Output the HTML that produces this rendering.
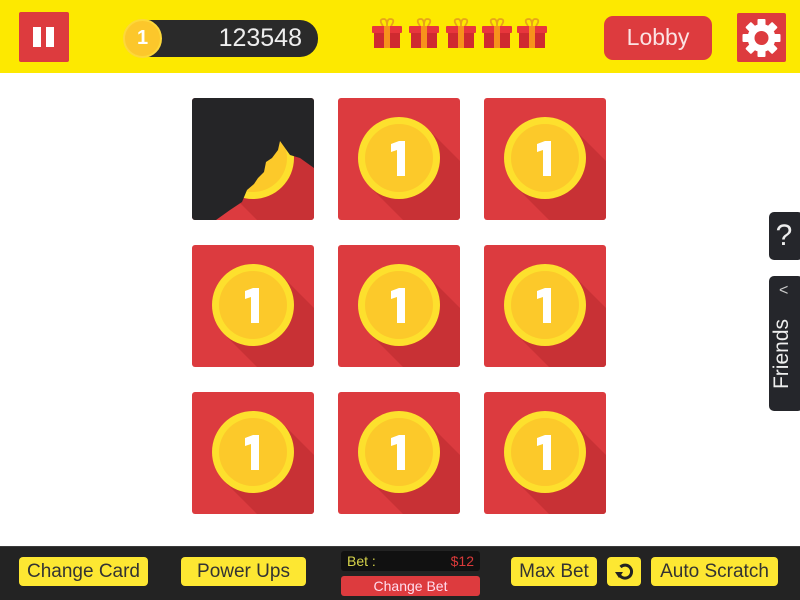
<!DOCTYPE html>
<html><head><meta charset="utf-8"><style>
*{margin:0;padding:0;box-sizing:border-box}
body{width:800px;height:600px;overflow:hidden;background:#fff;font-family:"Liberation Sans",sans-serif;position:relative}
.abs{position:absolute}
.top{left:0;top:0;width:800px;height:73px;background:#fde900}
.bot{left:0;top:546px;width:800px;height:54px;background:#232323;border-top:1px solid #3a3a3a}
.yb{position:absolute;background:#fde732;border-radius:4px;color:#333;font-size:19px;text-align:center;line-height:29px;height:29px;top:557px}
.tab{position:absolute;left:769px;width:34px;background:#25262b;border-radius:5px;color:#eee}
</style></head><body>
<div class="abs top"></div>
<div class="abs" style="left:19px;top:12px;width:50px;height:50px;background:#dd3b3e;border-radius:2px"></div>
<div class="abs" style="left:33px;top:27px;width:8px;height:20px;background:#fff"></div>
<div class="abs" style="left:46px;top:27px;width:8px;height:20px;background:#fff"></div>
<div class="abs" style="left:148px;top:20px;width:170px;height:37px;background:#2a2a2a;border-radius:0 18px 18px 0"></div>
<div class="abs" style="left:123px;top:19px;width:39px;height:39px;border-radius:50%;background:#fcc72b;border:2px solid #fdd83a"></div>
<div class="abs" style="left:123px;top:19px;width:39px;height:39px;color:#fff;font-weight:bold;font-size:20px;text-align:center;line-height:39px">1</div>
<div class="abs" style="left:200px;top:22px;width:102px;text-align:right;color:#eee;font-size:25px;line-height:33px">123548</div>
<svg class="abs" style="left:372px;top:18px" width="180" height="32" viewBox="0 0 180 32">
<defs><g id="g">
<path d="M11 8 q-5 -7 1 -7 q3 0 3 7 q0 -7 3 -7 q6 0 1 7" fill="none" stroke="#e8a31a" stroke-width="1.8"/>
<rect x="0" y="8" width="30" height="7" rx="1" fill="#e8363c"/>
<rect x="2" y="15" width="26" height="15" fill="#cf2a30"/>
<rect x="12" y="8" width="6" height="22" fill="#f7921c"/>
</g></defs>
<use href="#g" x="0"/><use href="#g" x="37"/><use href="#g" x="74"/><use href="#g" x="110"/><use href="#g" x="145"/>
</svg>
<div class="abs" style="left:604px;top:16px;width:108px;height:44px;background:#dd3b3e;border-radius:9px;color:#fbe3e3;font-size:23px;text-align:center;line-height:42px">Lobby</div>
<div class="abs" style="left:737px;top:13px;width:49px;height:49px;background:#dd3b3e;border-radius:2px"></div>
<svg class="abs" style="left:737px;top:13px" width="49" height="49" viewBox="-24.5 -25 49 49">
<g fill="#fff">
<circle r="14"/>
<g id="t"><rect x="-4" y="-19" width="8" height="8" rx="1"/></g>
<use href="#t" transform="rotate(45)"/><use href="#t" transform="rotate(90)"/><use href="#t" transform="rotate(135)"/>
<use href="#t" transform="rotate(180)"/><use href="#t" transform="rotate(225)"/><use href="#t" transform="rotate(270)"/><use href="#t" transform="rotate(315)"/>
</g>
<circle r="7" fill="#dd3b3e"/>
</svg>
<svg class="abs" style="left:0;top:0" width="800" height="546">
<defs>
<clipPath id="c"><rect width="122" height="122" rx="3"/></clipPath>
<g id="tile"><g clip-path="url(#c)">
<rect width="122" height="122" fill="#dc3b3f"/>
<polygon points="90,31 190,131 132,189 32,89" fill="#c83135"/>
<circle cx="61" cy="60" r="41" fill="#fde02d"/>
<circle cx="61" cy="60" r="34" fill="#fcc92a"/>
<path d="M53 46 L61 43 L67 43 L67 78 L59 78 L59 52 L53 54 Z" fill="#fff"/>
</g></g>
<g id="first"><g clip-path="url(#c)">
<rect width="122" height="122" fill="#dc3b3f"/>
<polygon points="90,31 190,131 132,189 32,89" fill="#c83135"/>
<circle cx="61" cy="60" r="41" fill="#fde02d"/>
<circle cx="61" cy="60" r="34" fill="#fcc92a"/>
<path d="M0 0 H122 V70 L108 60 L98 57 L93 50 L88 43 L86 52 L80 60 L74 64 L72 74 L66 80 L62 86 L55 92 L50 104 L38 112 L24 122 H0 Z" fill="#252527"/>
</g></g>
</defs>
<use href="#first" x="192" y="98"/><use href="#tile" x="338" y="98"/><use href="#tile" x="484" y="98"/>
<use href="#tile" x="192" y="245"/><use href="#tile" x="338" y="245"/><use href="#tile" x="484" y="245"/>
<use href="#tile" x="192" y="392"/><use href="#tile" x="338" y="392"/><use href="#tile" x="484" y="392"/>
</svg>
<div class="tab" style="top:212px;height:48px;font-size:30px;text-align:center;line-height:48px;padding-right:4px">?</div>
<div class="tab" style="top:276px;height:135px">
<div class="abs" style="left:10px;top:6px;font-size:16px;color:#ccc">&lt;</div>
<div class="abs" style="left:-32px;top:66px;width:90px;font-size:21px;transform:rotate(-90deg);text-align:center;line-height:24px">Friends</div>
</div>
<div class="abs bot"></div>
<div class="yb" style="left:19px;width:129px">Change Card</div>
<div class="yb" style="left:181px;width:125px">Power Ups</div>
<div class="abs" style="left:341px;top:551px;width:139px;height:20px;background:#111;border-radius:3px;font-size:14px;line-height:20px;padding:0 6px">
<span style="color:#d7d44a">Bet :</span><span style="float:right;color:#d93a3a">$12</span></div>
<div class="abs" style="left:341px;top:576px;width:139px;height:20px;background:#dd3b3e;border-radius:3px;font-size:14px;line-height:20px;color:#fde;text-align:center">Change Bet</div>
<div class="yb" style="left:511px;width:86px">Max Bet</div>
<div class="yb" style="left:607px;width:34px"></div>
<svg class="abs" style="left:607px;top:557px" width="34" height="29" viewBox="0 0 34 29">
<path d="M12 17 A6.5 6.5 0 1 0 13.5 10" fill="none" stroke="#222" stroke-width="3"/>
<polygon points="8,15 16,15 12,21" fill="#222"/>
</svg>
<div class="yb" style="left:651px;width:127px">Auto Scratch</div>
</body></html>
